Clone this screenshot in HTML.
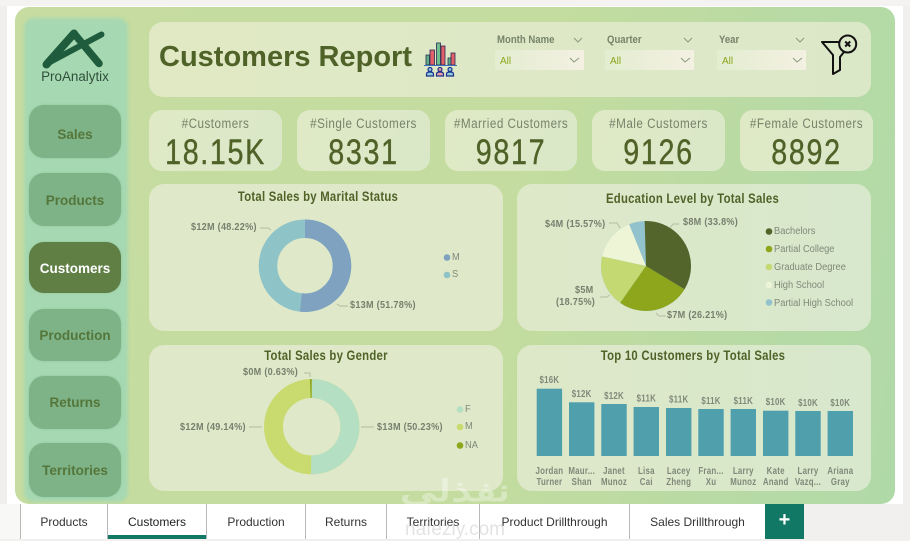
<!DOCTYPE html>
<html><head><meta charset="utf-8">
<style>
html,body{margin:0;padding:0}
body{width:910px;height:539px;overflow:hidden;position:relative;background:#f1f0ee;font-family:"Liberation Sans",sans-serif}
div{position:absolute;box-sizing:border-box}
.nav{left:29px;width:92px;border-radius:15px;background:#7db387;color:#55763a;font-weight:bold;font-size:13.5px;display:flex;align-items:center;justify-content:center;box-shadow:0 0 2px #8fc09a}
.kpi{top:110px;height:61px;width:133px;border-radius:13px;background:linear-gradient(120deg,#e0e9c6,#d9e8c8);text-align:center;color:#4f6228}
.kpi .l{left:0;right:0;top:6px;font-size:13.5px;color:#77836a;letter-spacing:.55px;white-space:nowrap;transform:scaleX(.865)}
.kpi .v{left:0;right:0;top:24px;font-size:35px;line-height:38px;letter-spacing:2px;color:#4f6228;transform:scaleX(.82);-webkit-text-stroke:.4px #4f6228}
.card{border-radius:15px;background:#dfe8c8}
.ttl{text-align:center;font-size:13.5px;font-weight:bold;color:#4f6228;letter-spacing:.3px;transform:scaleX(.84);white-space:nowrap}
.tab{top:504px;height:35px;background:#fff;border-left:1px solid #b9b9b9;font-size:12px;color:#333;text-align:center;line-height:37px;white-space:nowrap}
.sl{font-size:10px;font-weight:bold;color:#777f6e;letter-spacing:.3px;white-space:nowrap;transform:scaleX(.91);transform-origin:left center}
.lg{font-size:10px;color:#80897a;white-space:nowrap;transform:scaleX(.93);transform-origin:left center}
.sh{top:34px;font-size:11px;font-weight:bold;color:#77836a;white-space:nowrap;transform:scaleX(.87);transform-origin:left center}
.dd{top:50px;width:89px;height:20px;background:linear-gradient(90deg,#e3edd0,#f4f0e2);color:#8ea61c;font-size:10px;line-height:23px;padding-left:5px}
svg text.b{transform-box:fill-box;transform-origin:center;transform:scaleX(.79)}
</style></head>
<body>
<div style="left:0;top:0;width:910px;height:6px;background:#f4f3f2"></div>
<div style="left:0;top:6px;width:7px;height:498px;background:#f0efee"></div>
<div style="left:7px;top:6px;width:896px;height:498px;background:#fff"></div>
<div style="left:15px;top:7px;width:880px;height:497px;border-radius:14px;background:linear-gradient(100deg,#c6dca0 0%,#c4dc9f 55%,#b0d9a8 100%)"></div>
<div style="left:24px;top:18px;width:104px;height:484px;background:#a6d8b1;border-radius:10px;filter:blur(1.5px)"></div>

<svg style="position:absolute;left:0;top:0" width="130" height="90" viewBox="0 0 130 90">
<g fill="none" stroke="#1f5c3d" stroke-linecap="round" stroke-linejoin="round">
<path d="M46.500 64.500 L74 33.500" stroke-width="8"/>
<path d="M74 33.500 L99 63.500" stroke-width="7.500"/>
<path d="M50 62 L101.500 34.500" stroke-width="6"/>
</g>
</svg>
<div style="left:35px;top:69px;width:80px;text-align:center;font-size:13.4px;color:#2f4f3c;white-space:nowrap">ProAnalytix</div>

<div class="nav" style="top:105px;height:53px;padding-top:5px">Sales</div>
<div class="nav" style="top:173px;height:53px;padding-top:1px">Products</div>
<div class="nav" style="top:242px;height:51px;background:#5f7f45;color:#fff;padding-top:1px">Customers</div>
<div class="nav" style="top:309px;height:52px">Production</div>
<div class="nav" style="top:376px;height:53px">Returns</div>
<div class="nav" style="top:443px;height:54px">Territories</div>

<div style="left:149px;top:22px;width:722px;height:75px;border-radius:14px;background:linear-gradient(90deg,#e1e9c4,#dbe8c8)"></div>
<div style="left:159px;top:39px;font-size:29px;line-height:36px;font-weight:bold;color:#4f6228;white-space:nowrap">Customers Report</div>

<svg style="position:absolute;left:420px;top:38px" width="40" height="44" viewBox="0 0 40 44">
<g stroke="#2a2a50" stroke-width=".8">
<rect x="6" y="17" width="3.500" height="10" fill="#5fb08a"/><rect x="10" y="12" width="4.500" height="15" fill="#e0606a"/>
<rect x="16.500" y="5" width="4" height="22" fill="#6fbf90"/><rect x="21" y="8" width="4" height="19" fill="#e0606a"/>
<rect x="28" y="20" width="3" height="7" fill="#5fb08a"/><rect x="31" y="15" width="4" height="12" fill="#e0606a"/>
</g>
<line x1="4" y1="27.500" x2="37" y2="27.500" stroke="#3a6fc0" stroke-width="1"/>
<g fill="#8fd0d8" stroke="#1c2f8f" stroke-width="1.200">
<circle cx="10" cy="31.500" r="2"/><path d="M6.500 38v-2q0-2 3.500-2t3.500 2v2z"/>
<circle cx="20" cy="31.500" r="2" fill="#e8a0a0"/><path d="M16.500 38v-2q0-2 3.500-2t3.500 2v2z" fill="#e8a0a0"/>
<circle cx="30" cy="31.500" r="2"/><path d="M26.500 38v-2q0-2 3.500-2t3.500 2v2z"/>
</g>
</svg>

<div class="sh" style="left:497px">Month Name</div>
<div class="sh" style="left:607px">Quarter</div>
<div class="sh" style="left:719px">Year</div>
<div class="dd" style="left:495px">All</div>
<div class="dd" style="left:605px">All</div>
<div class="dd" style="left:717px">All</div>
<svg style="position:absolute;left:0;top:0" width="910" height="100" viewBox="0 0 910 100" fill="none" stroke="#8a9a80" stroke-width="1">
<path d="M574 38l4 4 4-4M684 38l4 4 4-4M796 38l4 4 4-4M570 58l4 4 5-4M681 58l4 4 5-4M793 58l4 4 5-4"/>
<path d="M839 42 H822 L833 55 V74 L840 70 V57 L844 52" stroke="#111" stroke-width="2" stroke-linejoin="round" stroke-linecap="round"/>
<circle cx="847.700" cy="44" r="8.500" stroke="#111" stroke-width="2"/>
<path d="M845.200 41.500l5 5M850.200 41.500l-5 5" stroke="#111" stroke-width="2"/>
</svg>

<div class="kpi" style="left:149px"><div class="l">#Customers</div><div class="v">18.15K</div></div>
<div class="kpi" style="left:297px"><div class="l">#Single Customers</div><div class="v">8331</div></div>
<div class="kpi" style="left:445px;width:132px"><div class="l">#Married Customers</div><div class="v">9817</div></div>
<div class="kpi" style="left:592px"><div class="l">#Male Customers</div><div class="v">9126</div></div>
<div class="kpi" style="left:740px"><div class="l">#Female Customers</div><div class="v">8892</div></div>

<div class="card" style="left:149px;top:184px;width:354px;height:147px"></div>
<div class="card" style="left:517px;top:184px;width:354px;height:147px;background:linear-gradient(90deg,#dde8c8,#d8e8cc)"></div>
<div class="card" style="left:149px;top:345px;width:354px;height:146px"></div>
<div class="card" style="left:517px;top:345px;width:354px;height:146px;background:linear-gradient(90deg,#dde8c8,#d8e8cc)"></div>

<div class="ttl" style="left:141px;width:354px;top:189px">Total Sales by Marital Status</div>
<div class="ttl" style="left:517px;width:351px;top:191px">Education Level by Total Sales</div>
<div class="ttl" style="left:149px;width:354px;top:348px">Total Sales by Gender</div>
<div class="ttl" style="left:517px;width:352px;top:348px">Top 10 Customers by Total Sales</div>

<svg style="position:absolute;left:0;top:0" width="910" height="539" viewBox="0 0 910 539">
<!-- marital donut -->
<circle cx="305" cy="265.700" r="37" fill="none" stroke="#8ec3c8" stroke-width="18.500"/>
<circle cx="305" cy="265.700" r="37" fill="none" stroke="#7fa2c0" stroke-width="18.500" pathLength="100" stroke-dasharray="51.780 48.220" transform="rotate(-90 305 265.700)"/>
<path d="M260 228h8l3 2M337 304l3 2h8" fill="none" stroke="#b5bda5"/>
<circle cx="447" cy="257.500" r="3.300" fill="#7fa2c0"/><circle cx="447" cy="275" r="3.300" fill="#8ec3c8"/>
<!-- pie -->
<g transform="rotate(-90 646 266)">
<circle cx="646" cy="266" r="22.500" fill="none" stroke="#92c3cc" stroke-width="45"/>
<circle cx="646" cy="266" r="22.500" fill="none" stroke="#eef5d6" stroke-width="45" pathLength="100" stroke-dasharray="0 78.760 15.570 100"/>
<circle cx="646" cy="266" r="22.500" fill="none" stroke="#c5d973" stroke-width="45" pathLength="100" stroke-dasharray="0 60.010 18.750 100"/>
<circle cx="646" cy="266" r="22.500" fill="none" stroke="#8ea61c" stroke-width="45" pathLength="100" stroke-dasharray="0 33.800 26.210 100"/>
<circle cx="646" cy="266" r="22.500" fill="none" stroke="#53652b" stroke-width="45" pathLength="100" stroke-dasharray="33.800 66.200"/>
</g>
<path d="M670 228l3-4h6M620 228l-3-5h-8M610 295l-3 2h-7M656 313l3 3h7" fill="none" stroke="#b5bda5"/>
<circle cx="769" cy="231.500" r="3.300" fill="#53652b"/><circle cx="769" cy="249" r="3.300" fill="#8ea61c"/><circle cx="769" cy="267" r="3.300" fill="#c5d973"/><circle cx="769" cy="285" r="3.300" fill="#eef5d6"/><circle cx="769" cy="302.500" r="3.300" fill="#92c3cc"/>
<!-- gender donut -->
<circle cx="311.700" cy="426.700" r="38.200" fill="none" stroke="#c9db6e" stroke-width="19"/>
<circle cx="311.700" cy="426.700" r="38.200" fill="none" stroke="#b5dfc3" stroke-width="19" pathLength="100" stroke-dasharray="50.230 49.770" transform="rotate(-90 311.700 426.700)"/>
<circle cx="311.700" cy="426.700" r="38.200" fill="none" stroke="#8ea61c" stroke-width="19" pathLength="100" stroke-dasharray="0 99.370 .63 1" transform="rotate(-90 311.700 426.700)"/>
<path d="M304 373h6v4M249 427h13M361 427h13" fill="none" stroke="#b5bda5"/>
<circle cx="460" cy="409.500" r="3.300" fill="#b5dfc3"/><circle cx="460" cy="427" r="3.300" fill="#c9db6e"/><circle cx="460" cy="445.500" r="3.300" fill="#8ea61c"/>
<!-- bars -->
<g fill="#4f9fad">
<rect x="536.700" y="388.700" width="25.400" height="67.300"/><rect x="569" y="402.300" width="25.400" height="53.700"/>
<rect x="601.300" y="404" width="25.400" height="52"/><rect x="633.600" y="407" width="25.400" height="49"/>
<rect x="666" y="408" width="25.400" height="48"/><rect x="698.300" y="409" width="25.400" height="47"/>
<rect x="730.600" y="409" width="25.400" height="47"/><rect x="763" y="410.700" width="25.400" height="45.300"/>
<rect x="795.300" y="411" width="25.400" height="45"/><rect x="827.600" y="411" width="25.400" height="45"/>
</g>
<g font-family="Liberation Sans, sans-serif" font-size="10" font-weight="bold" fill="#80897a" text-anchor="middle" letter-spacing=".3">
<text class="b" x="549.400" y="383">$16K</text><text class="b" x="581.700" y="397">$12K</text><text class="b" x="614" y="399">$12K</text><text class="b" x="646.300" y="401.500">$11K</text><text class="b" x="678.700" y="402.500">$11K</text><text class="b" x="711" y="404">$11K</text><text class="b" x="743.300" y="404">$11K</text><text class="b" x="775.700" y="405">$10K</text><text class="b" x="808" y="406">$10K</text><text class="b" x="840.300" y="406">$10K</text>
<text class="b" x="549.400" y="474">Jordan</text><text class="b" x="549.400" y="485">Turner</text>
<text class="b" x="581.700" y="474">Maur...</text><text class="b" x="581.700" y="485">Shan</text>
<text class="b" x="614" y="474">Janet</text><text class="b" x="614" y="485">Munoz</text>
<text class="b" x="646.300" y="474">Lisa</text><text class="b" x="646.300" y="485">Cai</text>
<text class="b" x="678.700" y="474">Lacey</text><text class="b" x="678.700" y="485">Zheng</text>
<text class="b" x="711" y="474">Fran...</text><text class="b" x="711" y="485">Xu</text>
<text class="b" x="743.300" y="474">Larry</text><text class="b" x="743.300" y="485">Munoz</text>
<text class="b" x="775.700" y="474">Kate</text><text class="b" x="775.700" y="485">Anand</text>
<text class="b" x="808" y="474">Larry</text><text class="b" x="808" y="485">Vazq...</text>
<text class="b" x="840.300" y="474">Ariana</text><text class="b" x="840.300" y="485">Gray</text>
</g>
</svg>

<div class="sl" style="left:191px;top:222px">$12M (48.22%)</div>
<div class="sl" style="left:350px;top:300px">$13M (51.78%)</div>
<div class="lg" style="left:452px;top:252px">M</div>
<div class="lg" style="left:452px;top:269px">S</div>

<div class="sl" style="left:683px;top:217px">$8M (33.8%)</div>
<div class="sl" style="left:545px;top:219px">$4M (15.57%)</div>
<div class="sl" style="left:575px;top:285px">$5M</div>
<div class="sl" style="left:556px;top:297px">(18.75%)</div>
<div class="sl" style="left:667px;top:310px">$7M (26.21%)</div>
<div class="lg" style="left:774px;top:226px">Bachelors</div>
<div class="lg" style="left:774px;top:244px">Partial College</div>
<div class="lg" style="left:774px;top:262px">Graduate Degree</div>
<div class="lg" style="left:774px;top:280px">High School</div>
<div class="lg" style="left:774px;top:298px">Partial High School</div>

<div class="sl" style="left:243px;top:367px">$0M (0.63%)</div>
<div class="sl" style="left:180px;top:422px">$12M (49.14%)</div>
<div class="sl" style="left:377px;top:422px">$13M (50.23%)</div>
<div class="lg" style="left:465px;top:404px">F</div>
<div class="lg" style="left:465px;top:421px">M</div>
<div class="lg" style="left:465px;top:440px">NA</div>

<div style="left:0;top:504px;width:20px;height:35px;background:#f8f8f7"></div>
<div class="tab" style="left:20px;width:87px">Products</div>
<div class="tab" style="left:107px;width:99px;color:#222;font-weight:500">Customers<div style="left:0;right:0;bottom:0;height:4px;background:#117865"></div></div>
<div class="tab" style="left:206px;width:99px">Production</div>
<div class="tab" style="left:305px;width:81px">Returns</div>
<div class="tab" style="left:386px;width:93px">Territories</div>
<div class="tab" style="left:479px;width:150px">Product Drillthrough</div>
<div class="tab" style="left:629px;width:136px">Sales Drillthrough</div>
<div style="left:765px;top:504px;width:39px;height:35px;background:#117865;color:#fff;font-size:20px;font-weight:bold;text-align:center;line-height:32px">+</div>
<div style="left:400px;top:474px;font-size:30px;font-weight:bold;color:#ffffff;opacity:.35;white-space:nowrap;transform:scaleX(1.5);transform-origin:left center" dir="rtl">نفذلي</div>
<div style="left:405px;top:519px;font-size:19px;color:#bbb;opacity:.4;white-space:nowrap">nafezly.com</div>
</body></html>
